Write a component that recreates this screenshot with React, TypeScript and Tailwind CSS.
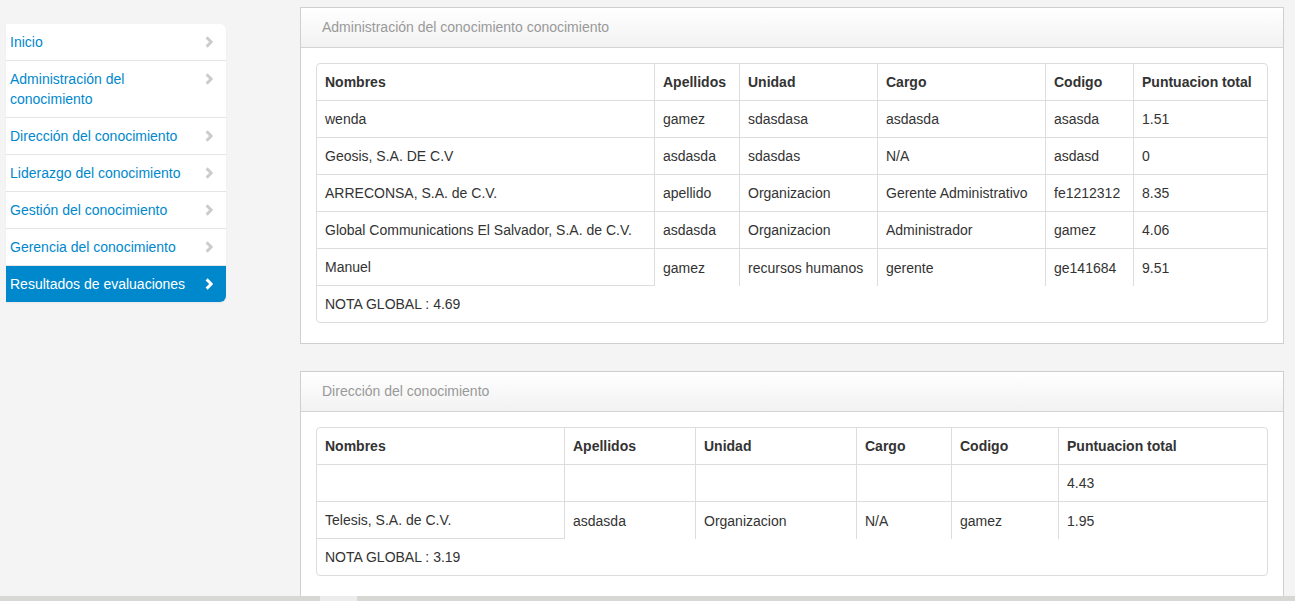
const menu = [
  "Inicio",
  "Administración del conocimiento",
  "Dirección del conocimiento",
  "Liderazgo del conocimiento",
  "Gestión del conocimiento",
  "Gerencia del conocimiento",
  "Resultados de evaluaciones",
];

const cols = ["Nombres", "Apellidos", "Unidad", "Cargo", "Codigo", "Puntuacion total"];

type Section = {
  title: string;
  widths: number[];
  rows: string[][];
  nota: string;
};

const sections: Section[] = [
  {
    title: "Administración del conocimiento conocimiento",
    widths: [338, 85, 138, 168, 88, 137],
    rows: [
      ["wenda", "gamez", "sdasdasa", "asdasda", "asasda", "1.51"],
      ["Geosis, S.A. DE C.V", "asdasda", "sdasdas", "N/A", "asdasd", "0"],
      ["ARRECONSA, S.A. de C.V.", "apellido", "Organizacion", "Gerente Administrativo", "fe1212312", "8.35"],
      ["Global Communications El Salvador, S.A. de C.V.", "asdasda", "Organizacion", "Administrador", "gamez", "4.06"],
      ["Manuel", "gamez", "recursos humanos", "gerente", "ge141684", "9.51"],
    ],
    nota: "4.69",
  },
  {
    title: "Dirección del conocimiento",
    widths: [248, 131, 161, 95, 107, 212],
    rows: [
      ["", "", "", "", "", "4.43"],
      ["Telesis, S.A. de C.V.", "asdasda", "Organizacion", "N/A", "gamez", "1.95"],
    ],
    nota: "3.19",
  },
];

// bold chevron like the icon-chevron-right glyph
function Chevron({ className }: { className: string }) {
  return (
    <svg viewBox="0 0 8 12" width="8" height="12" className={className}>
      <path d="M1.6 1.4 L6.2 6 L1.6 10.6" fill="none" stroke="currentColor" strokeWidth="2.9" />
    </svg>
  );
}

function Sidebar() {
  return (
    <ul className="mt-[24px] ml-[6px] w-[220px] shrink-0 self-start rounded-r-[6px] bg-white shadow-[0_1px_2px_rgba(0,0,0,0.06)]">
      {menu.map((m, i) => {
        const active = i === menu.length - 1;
        return (
          <li
            key={m}
            className={
              active
                ? "flex items-start rounded-br-[6px] bg-[#0088cc] py-2 pl-[4px] pr-[13px] leading-5 text-white"
                : "flex items-start border-b border-[#e5e5e5] py-2 pl-[4px] pr-[13px] leading-5 text-[#0088cc]"
            }
          >
            <span className="flex-1 pr-[4px]">{m}</span>
            <Chevron className={active ? "mt-[4px] shrink-0 text-white" : "mt-[4px] shrink-0 text-[#cccccc]"} />
          </li>
        );
      })}
    </ul>
  );
}

function Panel({ s, first }: { s: Section; first: boolean }) {
  const last = s.rows.length - 1;
  return (
    <div className={(first ? "mt-[7px] " : "mt-[27px] ") + "shrink-0 border border-[#cfcfcf] bg-white"}>
      <div className="flex h-[40px] items-center border-b border-[#d4d4d4] bg-gradient-to-b from-white to-[#f2f2f2] px-[21px] text-[#999]">
        {s.title}
      </div>
      <div className="px-[15px] pt-[15px] pb-[20px]">
        <div className="overflow-hidden rounded-[4px] border border-[#ddd]">
          <table className="w-full table-fixed border-separate border-spacing-0 text-[#333]">
            <colgroup>
              {s.widths.map((w, i) => (
                <col key={i} style={{ width: i === s.widths.length - 1 ? undefined : i === 0 ? w - 1 : w }} />
              ))}
            </colgroup>
            <thead>
              <tr>
                {cols.map((c, i) => (
                  <th
                    key={c}
                    className={(i > 0 ? "border-l border-[#ddd] " : "") + "px-2 py-2 text-left font-bold leading-5 whitespace-nowrap"}
                  >
                    {c}
                  </th>
                ))}
              </tr>
            </thead>
            <tbody>
              {s.rows.map((r, ri) => (
                <tr key={ri}>
                  {r.map((v, ci) => (
                    <td
                      key={ci}
                      className={
                        "h-[37px] border-t border-[#ddd] px-2 py-2 leading-5 whitespace-nowrap " +
                        (ci > 0 ? "border-l " : "") +
                        (ri === last && ci === 0 ? "border-b " : "")
                      }
                    >
                      {v}
                    </td>
                  ))}
                </tr>
              ))}
              <tr>
                <td colSpan={6} className="px-2 py-2 leading-5">
                  NOTA GLOBAL : {s.nota}
                </td>
              </tr>
            </tbody>
          </table>
        </div>
      </div>
    </div>
  );
}

export default function App() {
  return (
    <div className="flex h-[601px] w-[1295px] flex-col overflow-hidden bg-[#f4f4f4] text-[14px] font-['Liberation_Sans',Arial,sans-serif]">
      <div className="flex min-h-0 flex-1 overflow-hidden">
        <Sidebar />
        <div className="ml-[74px] flex w-[984px] shrink-0 flex-col">
          {sections.map((s, i) => (
            <Panel key={s.title} s={s} first={i === 0} />
          ))}
        </div>
      </div>
      <div className="flex h-[5px] shrink-0 bg-[#d7d8d3]">
        <div className="ml-[320px] w-[37px] bg-[#ececec]" />
      </div>
    </div>
  );
}
